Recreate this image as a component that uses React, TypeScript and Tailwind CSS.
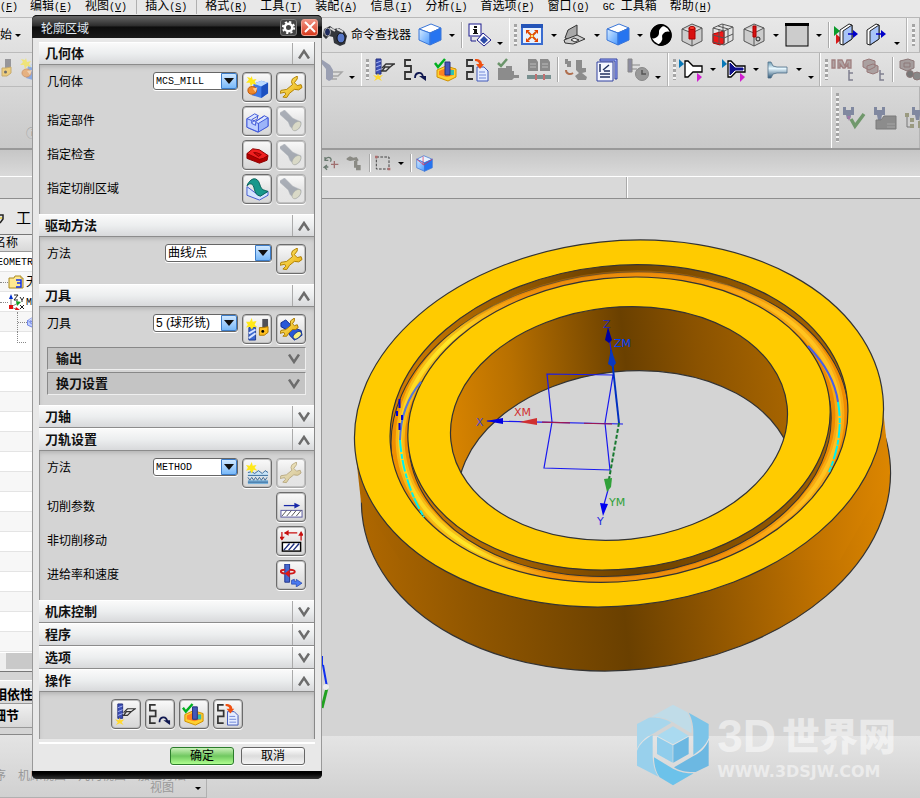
import React from 'react';

const SERIES = "font-['Liberation_Sans','Noto_Sans_CJK_SC',sans-serif]";

// 24x24 icon contents
const icons: Record<string, React.ReactNode> = {
  binoculars: (
    <g>
      <path d="M1 6l6-3 4 3 5-1 5 3 3 5-2 8-5 2-6-3-1-6-4-1-3 3-3-3z" fill="#33363b" />
      <ellipse cx="4.500" cy="9" rx="3" ry="4" fill="#1e2a5c" stroke="#aaa" />
      <ellipse cx="18" cy="15" rx="4" ry="5" fill="#5878c8" stroke="#111" />
      <path d="M7 5l5 3M14 6l6 3" stroke="#d8d8d8" strokeWidth="2" fill="none" />
    </g>
  ),
  cube: (
    <g stroke="#3a76d8">
      <path d="M1 6L13 1l10 4-11 5z" fill="#fff" />
      <path d="M1 6l11 4v12L1 17z" fill="url(#cubeFace)" />
      <path d="M12 10l11-5v12l-11 5z" fill="#2674f0" />
    </g>
  ),
  info: (
    <g>
      <rect x="1" y="1" width="12" height="12" fill="#fff" stroke="#1a1a8c" />
      <path d="M6 3h3v2H6zM5 6h4v4h1v1H5v-1h1V7H5z" fill="#111" />
      <path d="M3 14v4h5" stroke="#1a1a8c" fill="none" />
      <path d="M15 10l8 7-7 6-7-6z" fill="#fff" stroke="#1a1a8c" />
      <path d="M16 13l4 4-4 4-4-4z" fill="#2a4aa8" />
    </g>
  ),
  fit: (
    <g>
      <rect x="2" y="2" width="20" height="19" fill="#e8f2ff" stroke="#3a6cd0" strokeWidth="2" />
      <path d="M1 1h22v4H1z" fill="#2454b8" />
      <path d="M8 9l8 8M16 9l-8 8" stroke="#e05000" strokeWidth="2" />
      <path d="M6 7h4l-4 4zM18 7h-4l4 4zM6 19h4l-4-4zM18 19h-4l4-4z" fill="#e04000" />
      <rect x="11" y="12" width="2" height="2" fill="#ffe060" />
    </g>
  ),
  plane: (
    <g stroke="#333">
      <path d="M2 15L5 7l9-5v10l-7 5z" fill="#a8a8a8" />
      <path d="M1 17l13-5 8 4-12 5-8-1z" fill="#ccc" />
      <path d="M11 15l5 2-4 2-4-2z" fill="#eee" />
    </g>
  ),
  yinyang: (
    <g>
      <circle cx="12" cy="12" r="10" fill="#fff" stroke="#000" strokeWidth="1.500" />
      <path d="M16 2A10.500 10.500 0 0 0 2 15C5 16 7 15 9 13c2-3 0-5 2-7 1-2 3-3 5-4z" fill="#000" />
      <path d="M22 9A10.500 10.500 0 0 1 8 22c2-1 4-2 5-5 1-2-1-4 1-6 2-3 5-3 8-2z" fill="#000" />
    </g>
  ),
  wireA: (
    <g stroke="#555" fill="none">
      <path d="M2 6l10-5 10 4v13l-10 5-10-5zM2 6l10 4 10-5M12 10v13" fill="#ccc" />
      <path d="M9 5h6v11H9z" fill="#d81010" stroke="#a00" />
      <ellipse cx="12" cy="5" rx="3" ry="1.500" fill="#ff4030" stroke="#a00" />
    </g>
  ),
  wireB: (
    <g stroke="#555" fill="none">
      <path d="M2 11l11-3v12l-4 2-7-2z" fill="#f01818" stroke="#b00" />
      <path d="M2 5l9-4 11 3v13l-9 5-11-3zM2 5l11 3 9-4M13 8v14M7 3l10 3v14M2 12l11 3 9-4M8 6v15M12 1v8" />
    </g>
  ),
  wireC: (
    <g stroke="#555" fill="none">
      <path d="M2 6l10-5 10 4v13l-10 5-10-5zM2 6l10 4 10-5M12 10v13" fill="#ccc" />
      <path d="M11 3h3v11h-3z" fill="#d81010" stroke="#a00" />
      <circle cx="16" cy="16" r="2" stroke="#222" />
    </g>
  ),
  frame: (
    <g>
      <rect x="1" y="1" width="22" height="22" fill="#ccc" stroke="#000" />
      <path d="M0 0h24v3H0z" fill="#000" />
    </g>
  ),
  doorA: (
    <g>
      <path d="M0 3l6 5-6 5z" fill="#0a9a2a" />
      <path d="M2 11l6 5-6 5z" fill="#d81818" />
      <path d="M6 7l9-6 3 1v14l-9 6-3-1z" fill="#fff" stroke="#222" />
      <path d="M9 8l9-6v14l-9 6z" fill="#a8c4f8" stroke="#222" />
      <path d="M14 11h6" stroke="#0000c8" strokeWidth="1.500" />
      <path d="M19 7l5 4-5 4z" fill="#0000c8" />
    </g>
  ),
  doorB: (
    <g>
      <path d="M2 7l9-6 3 1v14l-9 6-3-1z" fill="#fff" stroke="#222" />
      <path d="M5 8l9-6v14l-9 6z" fill="#a8c4f8" stroke="#222" />
      <path d="M11 11h6" stroke="#0000c8" strokeWidth="1.500" />
      <path d="M16 7l5 4-5 4z" fill="#0000c8" />
    </g>
  ),
  drill: (
    <g fill="#8a90a8">
      <path d="M1 1l9 6 3 5v9l-4 2-3-2V11L1 5z" />
      <path d="M13 14h9l-4 4h-5M12 21h5" fill="none" stroke="#999" strokeWidth="1.500" />
    </g>
  ),
  generate: (
    <g>
      <path d="M4 1h5v15H4z" fill="#3c50b8" stroke="#26307c" />
      <path d="M4 5l5-2M4 9l5-2M4 13l5-2" stroke="#a8b4f0" />
      <path d="M23 6H14L10 10M22 6l-4 3h-5l-3 4M18 9l-4 4H9" fill="none" stroke="#333" strokeWidth="1.300" />
      <path d="M6 15l1 3 4-1-3 3 2 3-4-2-4 2 2-3-3-3 4 1z" fill="#ffd830" />
    </g>
  ),
  replay: (
    <g fill="none" stroke="#333" strokeWidth="1.800">
      <path d="M8 2H2v6h6v6H2v7h6" />
      <path d="M12 20c0-6 7-7 8-1" stroke="#101850" />
      <path d="M16 18h7v5z" fill="#101850" stroke="none" />
    </g>
  ),
  verify: (
    <g>
      <path d="M3 12l9-4 10 3v8l-8 4-11-4z" fill="#ffd030" stroke="#d09000" />
      <path d="M5 13l7-3 8 2v5l-7 2-8-2z" fill="#ff8020" />
      <path d="M16 12h4v5h-4z" fill="#30c0b0" />
      <path d="M11 4h5v13h-5z" fill="#4458b8" stroke="#26307c" />
      <path d="M1 5l3 4 7-8" fill="none" stroke="#00b020" strokeWidth="2.500" />
    </g>
  ),
  list: (
    <g>
      <path d="M8 2H2v6h6v6H2v7h6" fill="none" stroke="#333" strokeWidth="1.800" />
      <path d="M12 9h7l4 4v10H12z" fill="#e4ecff" stroke="#4058b8" />
      <path d="M14 14h6M14 17h7M14 20h7" stroke="#7088d8" />
      <path d="M10 1c5 0 7 2 7 5h2l-4 5-4-5h3c0-2-2-3-4-3z" fill="#f05010" />
    </g>
  ),
  machine: (
    <g fill="#8c8c8c">
      <path d="M2 10h8V8h6v5h2v4h5v3h-5l-2 2H2z" />
      <path d="M2 5l3 3 6-7" fill="none" stroke="#6a946a" strokeWidth="2.500" />
    </g>
  ),
  sheets: (
    <g fill="#8a8a8a">
      <path d="M1 1h8l2 3v9H1zM13 1h8l2 3v9H13z" />
      <path d="M3 6h6M3 9h6M15 6h6M15 9h6" stroke="#bbb" />
      <path d="M0 17h24v4H0z" fill="#789090" />
      <path d="M9 16v6M17 16v6" stroke="#c07070" strokeWidth="2" />
    </g>
  ),
  post: (
    <g fill="#8c8c8c">
      <path d="M1 1h3v2h3v6H3V6H1zM12 2h6v8h4v4l-4 1 5 4-1 3h-8l-3-4 4-3-3-3z" />
      <path d="M2 12c0 4 4 5 7 3" fill="none" stroke="#b07050" strokeWidth="2" />
    </g>
  ),
  doc: (
    <g>
      <path d="M5 1h17v20h-2V3H5z" fill="#a8b4ff" stroke="#3040a0" />
      <path d="M2 4h16v19H2z" fill="#f4f6ff" stroke="#3040a0" />
      <path d="M5 6v8M8 12l6-5M5 16h10M5 19h10M9 13h6" fill="none" stroke="#203060" strokeWidth="1.500" />
    </g>
  ),
  clock: (
    <g stroke="#888">
      <path d="M2 1h4v13H2zM6 7h8M6 11h5" fill="#8c8ca0" />
      <circle cx="16" cy="16" r="6.500" fill="#999" />
      <path d="M16 12v4h4" fill="none" stroke="#555" strokeWidth="1.500" />
    </g>
  ),
  toolWhite: (
    <g>
      <path d="M0 1l5 5-5 4z" fill="#0878b8" />
      <path d="M6 3h3l5 5h9v6h-9l-5 5H6z" fill="#fff" stroke="#000" strokeWidth="1.300" />
      <path d="M18 15l5 4-5 5z" fill="#d020d0" />
    </g>
  ),
  toolNavy: (
    <g>
      <path d="M0 1l5 5-5 4z" fill="#0878b8" />
      <path d="M6 3h3l5 5h9v6h-9l-5 5H6z" fill="#fff" stroke="#000" strokeWidth="1.300" />
      <path d="M8 5l5 5h8v2h-8l-5 5z" fill="#10108c" stroke="#10108c" />
      <path d="M18 15l5 4-5 5z" fill="#d020d0" />
    </g>
  ),
  toolSteel: (
    <path d="M3 4h3l2 4 4 1h10v6H12l-4 1-2 4H3z" fill="url(#steel)" stroke="#507088" strokeWidth=".8" />
  ),
  forkTree: (
    <g fill="none" stroke="#a08080" strokeWidth="1.300">
      <path d="M1 2h3v8H1zM7 2h4l3 6 2-6h4v8h-3V6l-3 4h-2L9 6v4H7z" fill="#b0a4a4" />
      <path d="M18 12v10h4M18 15h4" stroke="#808090" strokeWidth="1.500" />
    </g>
  ),
  boxTree: (
    <g stroke="#987878" fill="#aaa0a0">
      <path d="M1 3l6-2 6 2v6l-6 3-6-3zM5 8l6-2 5 2v6l-5 2-6-2z" />
      <path d="M18 12v10h4M18 16h4" fill="none" stroke="#808090" strokeWidth="1.500" />
    </g>
  ),
  boxFind: (
    <g stroke="#8c7878" fill="#a49c9c">
      <path d="M1 3l8-2 6 2v7l-7 3-7-3zM5 5h6v4H5z" />
      <circle cx="11" cy="16" r="3.500" fill="#777" />
      <circle cx="18" cy="18" r="4" fill="#888" />
    </g>
  ),
  clampOk: (
    <g>
      <path d="M1 1h3v3h5V1h3v8H9l-1 4H5L4 9H1z" fill="#8088a0" />
      <path d="M5 10h4l-2 5z" fill="#a078a8" />
      <path d="M9 13l4 7 9-12" fill="none" stroke="#70986c" strokeWidth="3.500" />
    </g>
  ),
  clampBox: (
    <g>
      <path d="M1 1h3v3h5V1h3v8H9l-1 5H5L4 9H1z" fill="#8088a0" />
      <path d="M3 14h5l3-4h12v13H3z" fill="#8c8c8c" stroke="#7a7a7a" />
      <path d="M14 18h8M14 21h8" stroke="#a4a4a4" />
    </g>
  ),
  clampTree: (
    <g>
      <path d="M8 1h3v3h5V1h3v8h-3l-1 5h-3l-1-5H8z" fill="#8088a0" />
      <path d="M1 7h4v4H1zM6 12h4v4H6zM6 18h4v4H6zM14 15h6v7h-6z" fill="#9a9a80" />
      <path d="M3 11v10h3" fill="none" stroke="#777" />
    </g>
  ),
  undoMove: (
    <g fill="none" stroke="#6a7a70" strokeWidth="2">
      <path d="M3 7c4-6 12-3 8 3M3 3v5h5M8 18H2l4-3M2 18l4 4" />
      <path d="M17 9v11M12 14h11" stroke="#a07070" />
    </g>
  ),
  find: (
    <g fill="#8a8a84">
      <path d="M1 5l5-3 5 2 5-1 3 5-3 2-3-2-7 1-5-2zM12 9h5v10h-5zM15 15h7v8h-7z" />
    </g>
  ),
  marquee: (
    <g fill="none" stroke="#444">
      <rect x="2" y="3" width="19" height="18" strokeDasharray="4 2" strokeWidth="1.500" />
      <path d="M0 1h4v4H0zM19 19h4v4h-4z" fill="#b07070" stroke="none" />
    </g>
  ),
  viewCube: (
    <g stroke="#3a76d8">
      <path d="M1 6L11 1l12 5-11 5z" fill="#e8f2ff" />
      <path d="M1 6l11 5v12L1 18z" fill="url(#cubeFace)" />
      <path d="M12 11l11-5v12l-11 5z" fill="#2674f0" />
      <path d="M1 6l10 8 12-8M10 2v12" stroke="#e03050" fill="none" />
    </g>
  ),
  wrench: (
    <path
      d="M18 0L13 3Q11 6 13 9L7 14L1 15L0 18L5 17L6 19L3 22L7 22.500L10 18L15 14Q20 16 23 12L22 9L18 10L15 7L18 3z"
      fill="url(#gold)"
      stroke="#b08000"
    />
  ),
  newCube: (
    <g>
      <path d="M8 8l8-3 7 2v11l-7 5-10-3z" fill="#3c78e8" />
      <path d="M8 8l8-3 7 2-7 4z" fill="#b8d8ff" />
      <path d="M16 11l7-4v11l-7 5z" fill="#1c50c0" />
      <ellipse cx="6.500" cy="15" rx="4.500" ry="4" fill="#f08828" stroke="#c05808" />
      <path d="M7 13l5-1-2 5z" fill="#ffc890" />
      <path d="M6 0l1 4 4-1-2 3 2 3-4-1-2 3-1-4-4 0 3-3-2-3 4 1z" fill="#ffe818" />
    </g>
  ),
  part: (
    <g stroke="#4058d8" strokeLinejoin="round">
      <path d="M1 9l8-5 4 2-7 4 4 2 8-5 1-1 4 2v9l-11 6-11-5z" fill="#dce6ff" />
      <path d="M1 9l5 2v3l4 2v-3l3 1v9L1 18z" fill="#c0d0ff" />
      <path d="M13 14l10-6v9l-10 6z" fill="#9cb4f8" />
      <path d="M10 12l9-6M6 13l6-4V6" fill="none" />
    </g>
  ),
  check: (
    <g stroke="#8c0000">
      <path d="M1 10v5l13 5 8-3 1-5z" fill="#b00000" />
      <path d="M1 10L7 5l7 1 9 6-5 3-4 1z" fill="#f02020" />
      <path d="M8 9h3l5 2-3 2z" fill="#d00808" />
    </g>
  ),
  cutArea: (
    <g>
      <path d="M1 9v9l13 5 9-5v-4l-10 4z" fill="#d4e4ff" stroke="#4058d0" />
      <path d="M1 8C3 3 7 0 10 1c6 2 3 11 10 12l3 1-8 5C6 17 11 6 4 6z" fill="#18988c" stroke="#086058" />
    </g>
  ),
  torch: (
    <g>
      <path d="M0 3L5 0L14 9L23 13Q24 20 16 23L11 18L9 13L0 5z" fill="#7484a0" stroke="#8090a0" strokeWidth=".5" />
      <ellipse cx="18" cy="17.500" rx="3.500" ry="6" transform="rotate(42 18 17.500)" fill="#d4d498" stroke="#808870" strokeWidth=".5" />
    </g>
  ),
  newTool: (
    <g>
      <path d="M3 10h7v13H3z" fill="#3c68d0" stroke="#203c90" />
      <path d="M3 16l7-4M3 21l7-5" stroke="#d8e4ff" strokeWidth="2" />
      <path d="M17 1h6v10h-6z" fill="#505058" />
      <path d="M14 10h4l5-1v6l-4 3h-5z" fill="#ffc020" stroke="#b07800" />
      <circle cx="17.500" cy="14" r="1.500" fill="#000" />
      <path d="M6 0l1 4 4-1-2 4 3 3-4-1-2 3-2-3-4 1 2-3-2-3 4 0z" fill="#ffe818" />
    </g>
  ),
  editTool: (
    <g>
      <path d="M1 5l5-3 8 8 8 3 1 5-8 5-5-5-2-5-7-4z" fill="#2858d8" stroke="#102c90" />
      <ellipse cx="18" cy="18" rx="3" ry="5" transform="rotate(50 18 18)" fill="#f8f080" stroke="#204098" />
      <path d="M15 0L11 3V8L6 12L1 13L0 16L4 15L5 17L3 19H7L9 16L13 12Q17 13 19 10L18 7L15 8L13 6L15 3z" fill="url(#gold)" stroke="#a87800" />
    </g>
  ),
  newMethod: (
    <g>
      <path d="M2 11l4-1 3 2 4-3 4 3 3-3 3 2v4H2z" fill="#c8e4f8" />
      <path d="M2 19h21v4H2z" fill="#78b0d8" />
      <path d="M2 11l4-1 3 2 4-3 4 3 3-3 3 2M2 14h21M2 16l2 3 2-3 2 3 2-3 2 3 2-3 2 3 2-3 2 3 2-3M2 21h21" fill="none" stroke="#386898" />
      <path d="M6 0l1 4 4-1-2 3 3 3-4-1-2 4-2-4-4 1 2-3-2-3 4 1z" fill="#ffe818" />
    </g>
  ),
  cutParam: (
    <g>
      <path d="M4 10h14" stroke="#1828a8" strokeWidth="1.300" />
      <path d="M15 7l6 3-6 3z" fill="#1828a8" />
      <rect x="1" y="15" width="22" height="7" fill="#fff" stroke="#5858a0" />
      <path d="M2 21l5-6M7 21l5-6M12 21l5-6M17 21l5-6" stroke="#555" />
    </g>
  ),
  nonCut: (
    <g>
      <path d="M5 3h13M2 2v8M22 4v7" stroke="#c81010" strokeWidth="1.300" />
      <path d="M4 3l5-3v6zM-1 7h6l-3 4zM19 6h6l-3-5z" fill="#c81010" />
      <rect x="2.500" y="13" width="19" height="9" fill="#fff" stroke="#000" strokeWidth="1.500" />
      <path d="M4 21l6-7M9 21l6-7M14 21l6-7" stroke="#203080" strokeWidth="1.500" />
    </g>
  ),
  feeds: (
    <g>
      <path d="M5 0h5v19H5z" fill="#4868d0" stroke="#20348c" />
      <path d="M5 10C-1 9 0 6 5 6M10 6c7 0 7 4 1 4H7" fill="none" stroke="#d01818" strokeWidth="2" />
      <path d="M10 6v8l-5-4z" fill="#e01818" />
      <path d="M12 17v4h5v3l6-4-6-4v2h-2v-2z" fill="#4878f0" stroke="#2040a8" strokeWidth=".7" />
    </g>
  ),
};

function Icon({ name, className = 'size-6' }: { name: string; className?: string }) {
  return (
    <svg viewBox="0 0 24 24" className={`shrink-0 ${className}`} aria-hidden="true">
      {icons[name]}
    </svg>
  );
}

function Tool({ name, className = 'ml-[7px]', label }: { name: string; className?: string; label?: string }) {
  return (
    <button aria-label={label ?? name} className={`flex shrink-0 items-center ${className}`}>
      <Icon name={name} />
    </button>
  );
}

function Caret({ className = 'ml-1' }: { className?: string }) {
  return (
    <span className={`flex w-3 shrink-0 justify-center ${className}`}>
      <span className="border-x-[3px] border-t-[3px] border-x-transparent border-t-black" />
    </span>
  );
}

const Low = () => <Caret className="ml-[2px] mr-[3px] mt-4" />;

function Divider({ className = '' }: { className?: string }) {
  return <span className={`my-1 w-[2px] shrink-0 self-stretch border-l border-r border-l-[#aaa] border-r-white ${className}`} />;
}

function Grip() {
  return <span className="my-[6px] ml-1 mr-[3px] w-[3px] shrink-0 self-stretch bg-[repeating-linear-gradient(to_bottom,#a4a4a4_0_3px,#f4f4f4_3px_5px)]" />;
}

function Group({ children, className = '' }: { children: React.ReactNode; className?: string }) {
  return (
    <div className={`flex shrink-0 items-center self-stretch border-r border-l border-l-white border-r-[#b4b4b4] ${className}`}>
      {children}
    </div>
  );
}

const menus = [
  ['编辑', 'E'], ['视图', 'V'], null, ['插入', 'S'], null, ['格式', 'R'], ['工具', 'T'], ['装配', 'A'],
  ['信息', 'I'], ['分析', 'L'], ['首选项', 'P'], ['窗口', 'O'], ['GC', '工具箱'], ['帮助', 'H'],
];

function MenuBar() {
  return (
    <nav className="flex h-[18px] items-start overflow-hidden border-b border-[#b8b8b8] bg-[#e8e8e8] text-[12px] leading-[12px]">
      <button className="w-6 shrink-0 text-left leading-[12px]">
        <span className="font-['Liberation_Mono',monospace] text-[10px]">(<u>F</u>)</span>
      </button>
      {menus.map((m, i) =>
        m === null ? (
          <span key={i} className="mx-[2px] h-[14px] w-px shrink-0 bg-[#b0b0b0]" />
        ) : m[0] === 'GC' ? (
          <button key={i} className="shrink-0 pl-[6px] pr-[7px]">
            <span className="font-['Liberation_Mono',monospace] text-[10px]">GC </span>工具箱
          </button>
        ) : (
          <button key={i} className="shrink-0 whitespace-nowrap pl-[6px] pr-[7px]">
            {m[0]}
            <span className="font-['Liberation_Mono',monospace] text-[10px]">(<u>{m[1]}</u>)</span>
          </button>
        ),
      )}
    </nav>
  );
}

function Toolbars() {
  return (
    <header className="shrink-0">
      <MenuBar />
      <div className="flex h-[35px] items-center overflow-hidden border-b border-[#bbb] bg-gradient-to-b from-[#e8e8e8] to-[#dfdfdf]">
        <div className="flex w-[322px] shrink-0 items-center text-[12px]">
          <button className="flex items-center">始<Caret className="ml-0" /></button>
        </div>
        <button className="flex shrink-0 items-center gap-1 pl-px text-[12px]">
          <Icon name="binoculars" />命令查找器
        </button>
        <Tool name="cube" />
        <Caret />
        <Divider className="ml-[3px]" />
        <Tool name="info" className="ml-[5px]" />
        <Low />
        <Group>
          <Grip />
          <Tool name="fit" className="" /><Caret />
          <Tool name="plane" className="ml-[3px]" /><Caret />
          <Tool name="cube" className="ml-[3px]" /><Caret />
          <Tool name="yinyang" className="ml-[3px]" />
          <Tool name="wireA" />
          <Tool name="wireB" />
          <Tool name="wireC" /><Caret />
          <Tool name="frame" className="ml-[3px]" /><Caret />
          <Divider className="ml-[3px]" />
          <Tool name="doorA" className="ml-1" />
          <Tool name="doorB" />
          <Low />
        </Group>
        <Group className="flex-1"><Grip /></Group>
      </div>

      <div className="flex h-[34px] items-center overflow-hidden border-b border-[#bbb] bg-gradient-to-b from-[#e2e2e2] to-[#d9d9d9]">
        <div className="flex w-[320px] shrink-0 items-center gap-2 opacity-50">
          <Icon name="newTool" className="-ml-3 size-6" />
          <Icon name="newCube" />
        </div>
        <Tool name="drill" className="opacity-80" />
        <Low />
        <Group>
          <Grip />
          <Tool name="generate" className="" />
          <Tool name="replay" />
          <Tool name="verify" />
          <Tool name="list" />
          <Tool name="machine" />
          <Tool name="sheets" />
          <Divider className="ml-[6px]" />
          <Tool name="post" className="ml-[5px]" />
          <Tool name="doc" />
          <Tool name="clock" />
          <Low />
        </Group>
        <Group>
          <Grip />
          <Tool name="toolWhite" className="" /><Caret />
          <Tool name="toolNavy" className="ml-[3px]" /><Caret />
          <Tool name="toolSteel" className="ml-[3px]" /><Caret />
          <Caret className="mr-[2px] mt-4" />
        </Group>
        <Group>
          <Grip />
          <Tool name="forkTree" className="" />
          <Tool name="boxTree" />
          <Divider className="ml-[6px]" />
          <Tool name="boxFind" className="ml-[5px]" />
        </Group>
      </div>

      <div className="flex h-[63px] items-center overflow-hidden border-b-2 border-[#999] bg-gradient-to-b from-[#d8d8d8] to-[#c9c9c9]">
        <span className="mt-8 w-[831px] pl-[26px] text-[12px] text-[#999]">ⓘ</span>
        <Group className="w-[89px]">
          <Grip />
          <Tool name="clampOk" className="" />
          <Tool name="clampBox" />
          <Tool name="clampTree" />
        </Group>
      </div>

      <div className="flex h-[27px] items-center border-b border-white bg-gradient-to-b from-[#c6c6c6] to-[#dadada] pl-[323px]">
        <button aria-label="undo move"><Icon name="undoMove" className="size-4" /></button>
        <button aria-label="find" className="ml-[7px]"><Icon name="find" className="size-4" /></button>
        <Divider className="ml-[7px]" />
        <button aria-label="marquee" className="ml-1"><Icon name="marquee" className="size-4" /></button>
        <Caret />
        <Divider className="ml-[3px]" />
        <button aria-label="view cube" className="ml-1"><Icon name="viewCube" className="size-[17px]" /></button>
      </div>
      <div className="flex h-[22px] border-b border-[#8e8e8e] bg-[#d9d9d9]">
        <div className="w-[627px] border-r border-[#aaa]" />
        <div className="flex-1 border-l border-white" />
      </div>
    </header>
  );
}

function Navigator() {
  return (
    <aside className="flex w-[322px] shrink-0 flex-col overflow-hidden text-[12px]">
      <div className="flex h-[36px] items-center gap-3 border-b border-[#777] bg-[#e6e6e6] pt-1 text-[15px]">
        <svg viewBox="0 0 4 10" className="h-[10px] w-1" fill="none" stroke="#222" strokeWidth="1.500">
          <path d="M0 1h3v4L0 9" />
          <path d="M0 4h2" stroke="#e8d040" />
        </svg>
        工
      </div>
      <div className="h-[17px] overflow-hidden whitespace-nowrap border-b border-[#999] bg-gradient-to-b from-[#eee] to-[#d8d8d8] leading-[16px]">
        <span className="-ml-[6px]">名称</span>
      </div>
      <ul className="h-[401px] bg-[repeating-linear-gradient(to_bottom,#fff_0_19px,#e4e4e4_19px_20px,#f7f7f7_20px_39px,#e4e4e4_39px_40px)]">
        <li className="flex h-5 items-center font-['Liberation_Mono',monospace] text-[10px]"><span className="-ml-[3px]">EOMETR</span></li>
        <li className="flex h-5 items-center">
          <span className="w-2 border-t border-dotted border-[#888]" />
          <svg viewBox="0 0 16 14" className="mr-[2px] h-[14px] w-4"><path d="M1 3h5l1-2h6v2h2v10H1z" fill="#ffe890" stroke="#a88820" /><path d="M8 5h5v3H9h4v4H8" fill="none" stroke="#1030f0" strokeWidth="1.500" /></svg>
          无
        </li>
        <li className="flex h-5 items-center">
          <span className="w-2 border-t border-dotted border-[#888]" />
          <svg viewBox="0 0 16 16" className="mr-[2px] size-4">
            <path d="M3 13V2M3 13l7-4M3 13l7 3" fill="none" stroke="#888" />
            <path d="M1 5l2-5 2 5z" fill="#0030d0" /><path d="M8 7l5 1-4 4z" fill="#10a020" /><path d="M1 11h4v4H1zM8 13l4 3H7z" fill="#e01010" />
            <path d="M6 1h4L6 6h4M12 3l2 3 2-3M14 6v2M12 11l4 4M16 11l-4 4" fill="none" stroke="#222" />
          </svg>
          <span className="font-['Liberation_Mono',monospace] text-[10px]">M</span>
        </li>
        <li className="ml-[17px] flex h-5 items-center border-l border-dotted border-[#888]">
          <span className="w-[9px] border-t border-dotted border-[#888]" />
          <Icon name="part" className="size-3" />
        </li>
        <li className="ml-[17px] h-[11px] w-[9px] border-b border-l border-dotted border-[#888]" />
      </ul>
      <div className="flex h-[19px] border-b border-[#777] bg-[#eee] pl-[6px] pb-[2px]"><div className="w-40 bg-[#c9c9c9]" /></div>
      <h3 className="mt-[8px] h-[24px] overflow-hidden whitespace-nowrap border-t border-b border-t-white border-b-[#999] bg-gradient-to-b from-[#f0f0f0] to-[#d8d8d8] text-[13px] font-bold">
        <span className="-ml-[6px] block leading-[28px]">相依性</span>
      </h3>
      <h3 className="h-[24px] border-b border-[#999] bg-gradient-to-b from-[#f0f0f0] to-[#d8d8d8] text-[13px] font-bold leading-[23px]">
        <span className="-ml-[7px]">细节</span>
      </h3>
      <div className="mt-[6px] flex flex-1 flex-col justify-end border-t border-[#888] bg-gradient-to-b from-[#e4e4e4] to-[#d0d0d0]">
        <div className="w-[207px] border-r border-b border-[#b0b0b0] pb-[3px] leading-[12px] text-[#999]">
          <div className="flex gap-3 whitespace-nowrap"><span className="-ml-[6px]">序</span><span>机床视图</span><span>几何视图</span><span>加工方法</span></div>
          <div className="flex items-center justify-end"><span>视图</span><Caret className="ml-[18px] mr-[2px]" /></div>
        </div>
      </div>
    </aside>
  );
}

const C = { cx: 619, cy: 423.5 };

// one rim of the part; every rim is a scaled copy of the outer one
function Rim({ r, dx = 0, dy = 0, ...rest }: { r: number; dx?: number; dy?: number } & React.SVGProps<SVGEllipseElement>) {
  return (
    <ellipse
      cx={C.cx + dx}
      cy={C.cy + dy}
      rx={r}
      ry={r * 0.6875}
      transform={`rotate(-6 ${C.cx + dx} ${C.cy + dy})`}
      {...rest}
    />
  );
}

function Viewport() {
  const edge = { fill: 'none', stroke: '#333', strokeWidth: 1.2 };
  return (
    <main className="relative flex-1 overflow-hidden bg-[linear-gradient(to_bottom,#d4d4d4_0_537px,#e4e4e4_537px,#d0d0d0_100%)]">
      <svg viewBox="322 199 598 599" className="block h-[599px] w-[598px]" fontFamily="'DejaVu Sans', sans-serif" fontSize="12">
        <defs>
          <linearGradient id="cubeFace" x1="0" y1="0" x2="1" y2="1"><stop offset="0" stopColor="#d8ecff" /><stop offset="1" stopColor="#4898ff" /></linearGradient>
          <linearGradient id="steel" x1="0" y1="0" x2="0" y2="1"><stop offset="0" stopColor="#6898b0" /><stop offset=".4" stopColor="#e8f8ff" /><stop offset="1" stopColor="#305878" /></linearGradient>
          <linearGradient id="gold" x1="0" y1="0" x2="1" y2="1"><stop offset="0" stopColor="#fff080" /><stop offset="1" stopColor="#e8a800" /></linearGradient>
          <linearGradient id="side" gradientUnits="userSpaceOnUse" x1="354" y1="0" x2="890" y2="0">
            <stop offset="0" stopColor="#b06800" /><stop offset=".2" stopColor="#905600" /><stop offset=".48" stopColor="#6a4000" />
            <stop offset=".62" stopColor="#8a5200" /><stop offset=".85" stopColor="#c07200" /><stop offset="1" stopColor="#dc8600" />
          </linearGradient>
          <linearGradient id="bore" gradientUnits="userSpaceOnUse" x1="450" y1="0" x2="787" y2="0">
            <stop offset="0" stopColor="#d88400" /><stop offset=".2" stopColor="#b87000" /><stop offset=".54" stopColor="#6a4000" />
            <stop offset=".75" stopColor="#8a5200" /><stop offset="1" stopColor="#a66400" />
          </linearGradient>
          <linearGradient id="floor" gradientUnits="userSpaceOnUse" x1="390" y1="0" x2="848" y2="0">
            <stop offset="0" stopColor="#f09000" /><stop offset=".5" stopColor="#c87000" /><stop offset="1" stopColor="#f08c00" />
          </linearGradient>
          <linearGradient id="shine" gradientUnits="userSpaceOnUse" x1="390" y1="0" x2="848" y2="0">
            <stop offset="0" stopColor="#ffd020" /><stop offset=".15" stopColor="#ffe828" /><stop offset=".32" stopColor="#ff9c10" stopOpacity=".5" />
            <stop offset=".7" stopColor="#ff9c10" stopOpacity=".5" /><stop offset=".9" stopColor="#ffc420" /><stop offset="1" stopColor="#ffc020" />
          </linearGradient>
          <linearGradient id="wall" gradientUnits="userSpaceOnUse" x1="390" y1="0" x2="848" y2="0">
            <stop offset="0" stopColor="#d88000" /><stop offset=".5" stopColor="#6a4000" /><stop offset="1" stopColor="#a86400" />
          </linearGradient>
          <clipPath id="boreClip"><Rim r={169} /></clipPath>
          <clipPath id="grooveClip"><Rim r={229.600} /></clipPath>
        </defs>

        {/* outer side wall */}
        <Rim r={265.300} dx={7} dy={64} fill="url(#side)" stroke="#333" strokeWidth="1.200" />
        <path d="M354 438L361 502L400 560H840L890 473L883 409z" fill="url(#side)" />
        <Rim r={265.300} {...edge} fill="#ffcb00" />

        {/* groove */}
        <Rim r={229.600} fill="url(#wall)" />
        <g clipPath="url(#grooveClip)">
          <Rim r={229.600} dx={1} dy={7} fill="url(#floor)" stroke="#333" />
          <Rim r={220.500} dx={1} dy={4} fill="none" stroke="url(#shine)" strokeWidth="9" strokeOpacity=".6" />
          <Rim r={220.500} dx={1} dy={4} fill="none" stroke="url(#shine)" strokeWidth="4" />
          {/* inner wall shows below the inner rim */}
          <Rim r={211.800} dx={1} dy={6.500} fill="url(#wall)" stroke="#333" />
        </g>
        <Rim r={229.600} {...edge} />
        <Rim r={211.800} {...edge} fill="#ffcb00" />

        {/* bore */}
        <Rim r={169} fill="url(#bore)" />
        <g clipPath="url(#boreClip)"><Rim r={169} dx={7} dy={64} {...edge} fill="#d4d4d4" /></g>
        <Rim r={169} {...edge} />

        {/* tool path */}
        <g fill="none" strokeWidth="2">
          <path d="M808 346Q834 373 838 402" stroke="#4860e8" />
          <path d="M838 402Q844 436 829 472" stroke="#00f0f0" strokeDasharray="14 2 5 1" />
          <path d="M421 382Q401 405 400 440" stroke="#5878d8" />
          <path d="M400 440Q403 482 424 517" stroke="#00f0f0" strokeDasharray="12 2 5 1" />
          <path d="M399.500 399v9M397 411v5M402 415v5M399.500 423v7" stroke="#0000d8" />
        </g>

        {/* coordinate systems */}
        <g fill="none" stroke="#1818f0" strokeWidth="1.200">
          <path d="M613 375L547 374L552 422L544 468L610 470L605 423z" />
          <path d="M623 424L487 421M608 490L603 508M611 350L608 330" />
          <path d="M619 423L611 350" stroke="#0030c0" strokeWidth="2" />
          <path d="M619 423L608 485" stroke="#187830" strokeWidth="2" strokeDasharray="4 2" />
          <path d="M612 424L535 422" stroke="#a01850" strokeDasharray="28 14" />
        </g>
        <path d="M486 421l17-3v6z" fill="#0000e0" />
        <path d="M519 422l18-4v7z" fill="#d03030" />
        <path d="M608 327l4 13-3 3-4-3z" fill="#0000a0" />
        <path d="M611 349l5 14-3 4-5-3z" fill="#0838c0" />
        <path d="M604 479l8-1-1 9-4 5z" fill="#30a038" />
        <path d="M600 503l8 1-5 12z" fill="#0000f0" />
        <text x="476" y="426" fontSize="11" fill="#4848c8">X</text>
        <text x="514" y="416" fontSize="11" fill="#d03030">XM</text>
        <text x="603" y="328" fontSize="11" fill="#2828b0">Z</text>
        <text x="614" y="347" fontSize="11" fill="#0040ff">ZM</text>
        <text x="609" y="506" fontSize="11" fill="#30a038">YM</text>
        <text x="597" y="525" fontSize="11" fill="#2828e0">Y</text>

        {/* view triad, mostly behind the dialog */}
        <path d="M322 656v10M323 665l4 22" stroke="#1030f0" strokeWidth="2" fill="none" />
        <path d="M327 688l-5 20" stroke="#20a020" strokeWidth="3" />
        <circle cx="326" cy="687" r="3" fill="#eee" />
      </svg>
      <div className="absolute bottom-3 right-6 flex items-center gap-2">
        <svg viewBox="52 190 216 246" className="h-[82px] w-[72px]">
          <path d="M95 228L160 192L203 215C216 240 218 262 215 278L160 245C140 232 118 228 95 228z" fill="#c0dce8" />
          <path d="M207 216L267 250V292C258 315 240 330 221 343V285C222 258 218 235 207 216z" fill="#7cc4e8" />
          <path d="M267 298V375L228 394C205 395 180 392 163 380L220 347C245 335 260 318 267 298z" fill="#6cb8e2" />
          <path d="M103 350L160 384C180 395 200 398 222 398L160 434L120 410C108 395 103 370 103 350z" fill="#6cc2ea" />
          <path d="M99 283V347C100 370 104 390 116 408L52 375V330C60 310 78 293 99 283z" fill="#98d0ec" />
          <path d="M52 250L88 231C115 229 140 236 155 246L100 279C75 290 60 306 52 325z" fill="#a8d6ec" />
          <path d="M112 285L160 257L207 285L160 311z" fill="#aadaf0" />
          <path d="M112 288L159 314V366L112 340z" fill="#90cdec" />
          <path d="M161 314L207 288V340L161 366z" fill="#6cb8e2" />
        </svg>
        <div className="whitespace-nowrap font-bold text-white/50">
          <div className="flex items-center text-[38px] leading-[50px]">
            <span className="font-['Liberation_Sans',sans-serif] text-[46px]">3D</span>
            <span className="pb-1 pl-[6px] font-['Noto_Sans_CJK_SC',sans-serif] font-black">世界网</span>
          </div>
          <div className="font-['DejaVu_Sans',sans-serif] text-[16px] leading-[18px]">WWW.3DSJW.COM</div>
        </div>
      </div>
    </main>
  );
}

function Chevron({ up = false }: { up?: boolean }) {
  return (
    <svg viewBox="0 0 12 10" className="h-[10px] w-3 shrink-0" fill="none" stroke="#6c6c6c" strokeWidth="2.500">
      {up ? <path d="M1 9.500L6 2L11 9.500" /> : <path d="M1 .5L6 8L11 .5" />}
    </svg>
  );
}

function Section({ title, children }: { title: string; children?: React.ReactNode }) {
  return (
    <section>
      <h3>
        <button aria-expanded={!!children} className="flex h-[23px] w-full items-center border-t border-b border-t-white border-b-[#8c8c8c] bg-gradient-to-b from-[#fafafa] via-[#eceeef] to-[#d8d9db] pl-[6px] text-left text-[13px] font-bold text-[#111]">
          <span className="flex-1 leading-[20px]">{title}</span>
          <span className="flex h-full w-[22px] items-center justify-center border-l border-[#aaa]"><Chevron up={!!children} /></span>
        </button>
      </h3>
      {children && (
        <div className="border-l border-[#999] bg-[#d4d4d4] pr-2 pl-[7px] pt-[7px] pb-[10px] shadow-[inset_0_3px_4px_-1px_#b4b4b4]">{children}</div>
      )}
    </section>
  );
}

function IconButton({ name, disabled, label }: { name: string; disabled?: boolean; label: string }) {
  return (
    <button
      aria-label={label}
      disabled={disabled}
      className="flex size-[30px] shrink-0 items-center justify-center rounded-[4px] border border-[#6c6c6c] bg-gradient-to-b from-[#fafafa] via-[#e6e6e6] to-[#d6d6d6] shadow-[inset_0_0_0_1px_#c0c0c0,0_1px_0_#fff] disabled:border-[#aaa] disabled:to-[#e4e4e4]"
    >
      <Icon name={name} className={disabled ? 'size-[22px] opacity-60 grayscale-[50%]' : 'size-[23px]'} />
    </button>
  );
}

function Combo({ id, value, className, mono }: { id: string; value: string; className: string; mono?: boolean }) {
  return (
    <div className={`relative h-[18px] ${className}`}>
      <select
        id={id}
        className={`block h-[18px] w-full appearance-none rounded-[3px] border border-[#666] bg-white pl-[2px] pr-4 shadow-[0_1px_0_#fff] ${
          mono ? "font-['Liberation_Mono',monospace] text-[10px]" : 'text-[12px] leading-[16px]'
        }`}
      >
        <option>{value}</option>
      </select>
      <span className="pointer-events-none absolute right-px top-px flex h-4 w-4 items-center justify-center rounded-r-[2px] border border-[#3c7cc8] bg-gradient-to-b from-[#d0e8ff] to-[#78b8f8]">
        <span className="border-x-[5px] border-t-[6px] border-x-transparent border-t-[#111]" />
      </span>
    </div>
  );
}

function Row({ label, htmlFor, children }: { label: string; htmlFor?: string; children: React.ReactNode }) {
  return (
    <div className="flex items-start gap-1">
      {htmlFor ? (
        <label htmlFor={htmlFor} className="flex-1 leading-[20px]">{label}</label>
      ) : (
        <span className="flex-1 self-center leading-[20px]">{label}</span>
      )}
      {children}
    </div>
  );
}

function SubHeader({ title }: { title: string }) {
  return (
    <button aria-expanded={false} className="flex h-[23px] w-full items-center justify-between border border-t-[#888] border-l-[#888] border-r-[#eee] border-b-[#eee] bg-[#c4c4c4] pl-[8px] pr-[5px] text-[13px] font-bold text-[#111]">
      {title}
      <Chevron />
    </button>
  );
}

function Dialog() {
  return (
    <div role="dialog" aria-label="轮廓区域" className="absolute left-8 top-[15px] w-[290px] rounded-t-[5px] rounded-b-[5px] bg-[#1c1c1c] text-[12px] text-black">
      <div className="flex h-[23px] items-center gap-1 rounded-t-[5px] border-t border-[#111] bg-[linear-gradient(to_bottom,#666_0,#2c2c2c_45%,#0c0c0c_50%,#1a1a1a_100%)] pl-[9px] pr-1">
        <h2 className="flex-1 pt-1 leading-[16px] text-[#e0eaf4]">轮廓区域</h2>
        <button aria-label="settings" className="flex size-[17px] items-center justify-center rounded-[3px] border border-[#777] bg-[#444]">
          <svg viewBox="0 0 24 24" className="size-[15px]" fill="none" stroke="#fff">
            <circle cx="12" cy="12" r="6" strokeWidth="4" />
            <circle cx="12" cy="12" r="9" strokeWidth="3" strokeDasharray="3.530 3.530" />
          </svg>
        </button>
        <button aria-label="close" className="flex size-[17px] items-center justify-center rounded-[3px] border border-[#f0a090] bg-gradient-to-b from-[#f09080] to-[#d83818]">
          <svg viewBox="0 0 12 12" className="size-3" stroke="#fff" strokeWidth="2"><path d="M1 1l10 10M11 1L1 11" /></svg>
        </button>
      </div>
      <div className="border-x border-[#999] bg-[#e8e8e8] px-[6px] pt-1">
        <div className="border-r border-[#888]">
          <Section title="几何体">
            <div className="flex flex-col gap-1">
              <Row label="几何体" htmlFor="geometry">
                <Combo id="geometry" value="MCS_MILL" className="w-[85px]" mono />
                <IconButton name="newCube" label="新建几何体" />
                <IconButton name="wrench" label="编辑几何体" />
              </Row>
              <Row label="指定部件">
                <IconButton name="part" label="指定部件" />
                <IconButton name="torch" label="显示部件" disabled />
              </Row>
              <Row label="指定检查">
                <IconButton name="check" label="指定检查" />
                <IconButton name="torch" label="显示检查" disabled />
              </Row>
              <Row label="指定切削区域">
                <IconButton name="cutArea" label="指定切削区域" />
                <IconButton name="torch" label="显示切削区域" disabled />
              </Row>
            </div>
          </Section>
          <Section title="驱动方法">
            <Row label="方法" htmlFor="drive">
              <Combo id="drive" value="曲线/点" className="w-[107px]" />
              <IconButton name="wrench" label="编辑驱动方法" />
            </Row>
          </Section>
          <Section title="刀具">
            <Row label="刀具" htmlFor="tool">
              <Combo id="tool" value="5 (球形铣)" className="w-[85px]" />
              <IconButton name="newTool" label="新建刀具" />
              <IconButton name="editTool" label="编辑刀具" />
            </Row>
            <div className="mt-[3px] flex flex-col gap-[2px]">
              <SubHeader title="输出" />
              <SubHeader title="换刀设置" />
            </div>
          </Section>
          <Section title="刀轴" />
          <Section title="刀轨设置">
            <div className="flex flex-col gap-1">
              <Row label="方法" htmlFor="method">
                <Combo id="method" value="METHOD" className="w-[85px]" mono />
                <IconButton name="newMethod" label="新建方法" />
                <IconButton name="wrench" label="编辑方法" disabled />
              </Row>
              <Row label="切削参数"><IconButton name="cutParam" label="切削参数" /></Row>
              <Row label="非切削移动"><IconButton name="nonCut" label="非切削移动" /></Row>
              <Row label="进给率和速度"><IconButton name="feeds" label="进给率和速度" /></Row>
            </div>
          </Section>
          <Section title="机床控制" />
          <Section title="程序" />
          <Section title="选项" />
          <Section title="操作">
            <div className="flex justify-center gap-1">
              <IconButton name="generate" label="生成" />
              <IconButton name="replay" label="重播" />
              <IconButton name="verify" label="确认" />
              <IconButton name="list" label="列表" />
            </div>
          </Section>
        </div>
        <div className="mt-[3px] flex justify-end gap-[7px] border-t-2 border-white pt-[3px] pr-[10px] pb-[6px]">
          <button className="h-[18px] w-16 rounded-[3px] border border-[#2c7c2c] bg-gradient-to-b from-[#c8f0b8] via-[#70c860] to-[#b0ff90] leading-[16px] shadow-[0_1px_0_#fff]">确定</button>
          <button className="h-[18px] w-16 rounded-[3px] border border-[#666] bg-gradient-to-b from-white via-[#dcdcdc] to-[#f4f4f4] leading-[16px] shadow-[0_1px_0_#fff]">取消</button>
        </div>
      </div>
      <div className="h-2 rounded-b-[5px] bg-gradient-to-b from-black to-[#333]" />
    </div>
  );
}

export default function App() {
  return (
    <div className={`relative flex min-h-screen flex-col overflow-hidden bg-[#d4d4d4] text-black ${SERIES}`}>
      <Toolbars />
      <div className="flex flex-1">
        <Navigator />
        <Viewport />
      </div>
      <Dialog />
    </div>
  );
}
